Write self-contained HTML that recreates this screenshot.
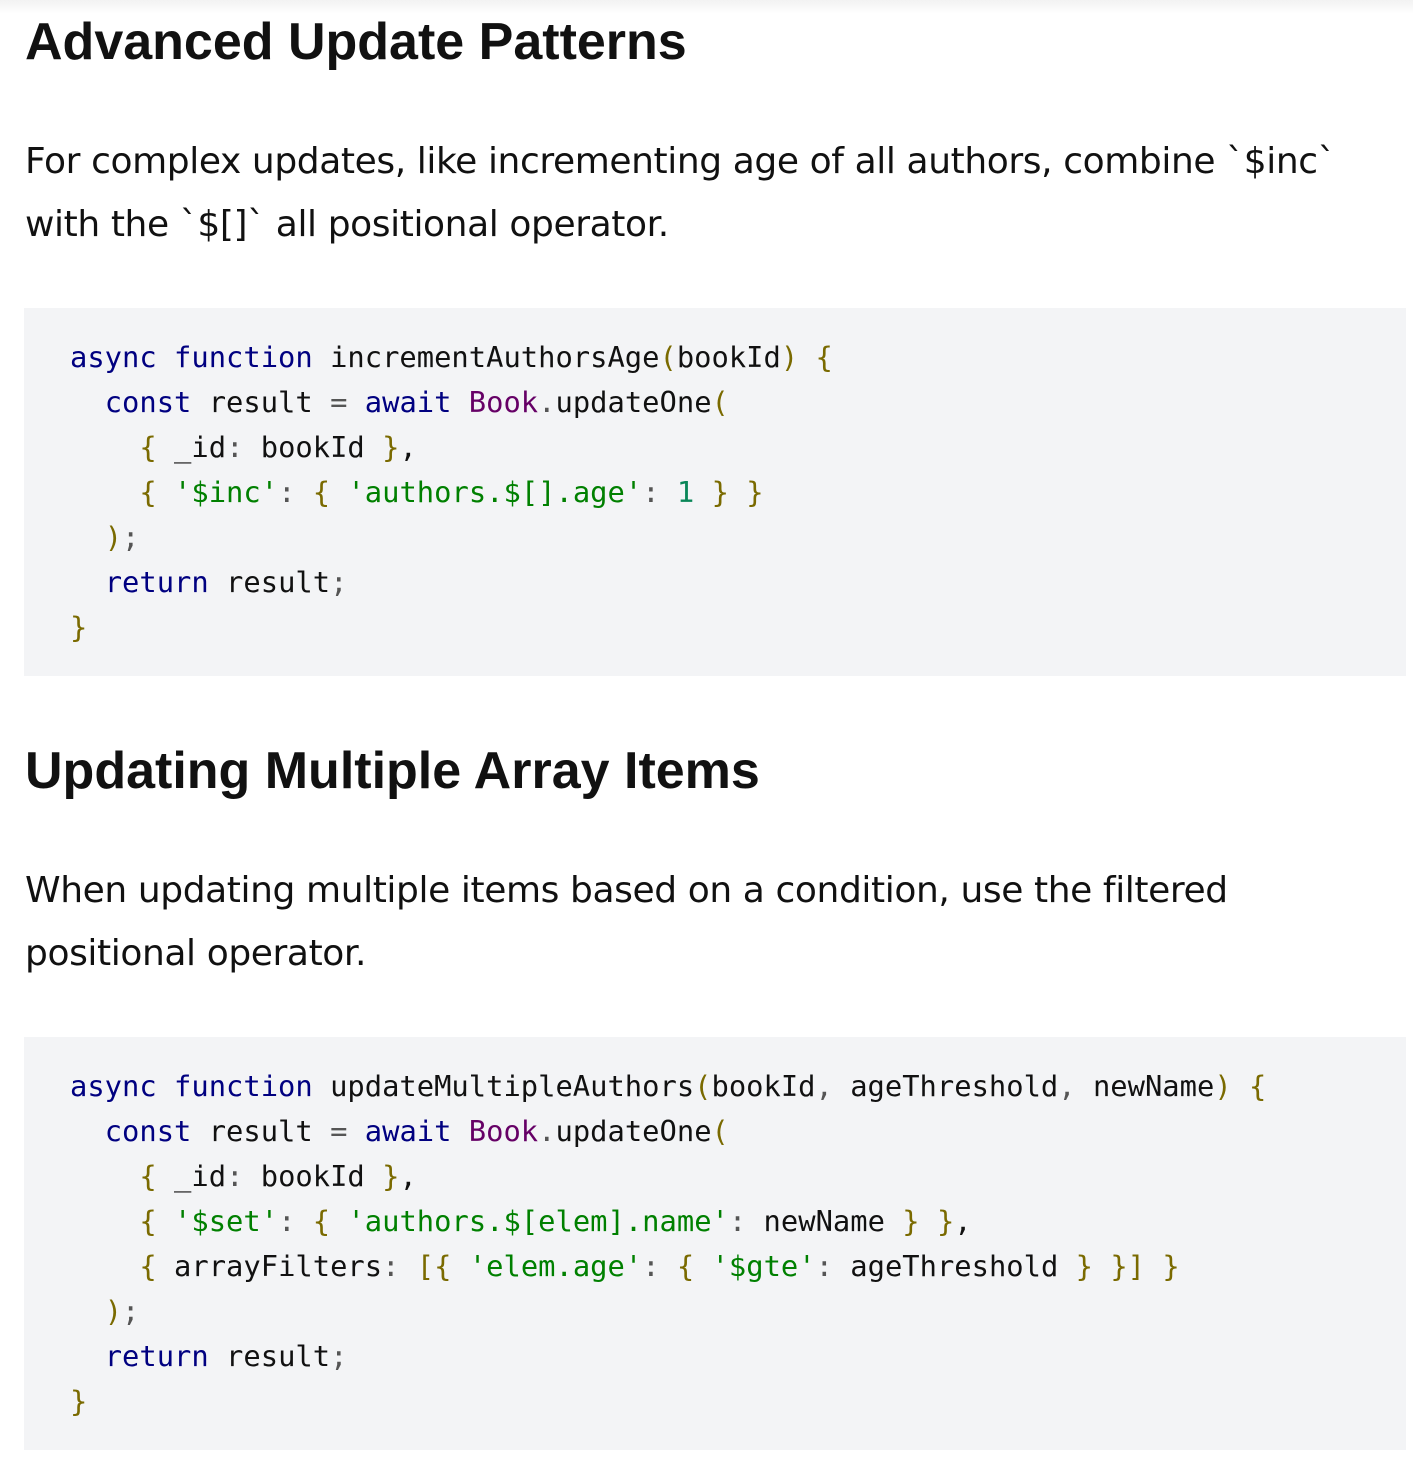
<!DOCTYPE html>
<html><head><style>
body{margin:0;width:1413px;height:1462px;background:#fff;position:relative;overflow:hidden;font-family:"DejaVu Sans","Liberation Sans",sans-serif;color:#111}
.h{position:absolute;left:25px;margin:0;font-family:"Liberation Sans",sans-serif;font-size:52px;font-weight:bold;line-height:60px;white-space:nowrap;letter-spacing:0px}
.p{position:absolute;left:25px;margin:0;font-size:36px;line-height:63px;width:1360px;letter-spacing:-0.4px}
.c{position:absolute;left:24px;width:1382px;background:#f3f4f6}
pre{margin:0;position:absolute;left:46px;font-family:"DejaVu Sans Mono","Liberation Mono",monospace;font-size:28.8px;line-height:45px;color:#111}
.k{color:#000080}.b{color:#7a6a00}.s{color:#008000}.n{color:#098658}.cl{color:#660066}.g{color:#555}
.top{position:absolute;top:0;left:0;width:100%;height:14px;background:linear-gradient(#f2f2f2,#fff)}
</style></head><body>
<div class="top"></div>
<h1 class="h" style="top:12px">Advanced Update Patterns</h1>
<p class="p" style="top:130px">For complex updates, like incrementing age of all authors, combine `$inc` with the `$[]` all positional operator.</p>
<div class="c" style="top:308px;height:368px"><pre style="top:27px"><span class="k">async function</span> incrementAuthorsAge<span class="b">(</span>bookId<span class="b">)</span> <span class="b">{</span>
  <span class="k">const</span> result <span class="g">=</span> <span class="k">await</span> <span class="cl">Book</span><span class="g">.</span>updateOne<span class="b">(</span>
    <span class="b">{</span> _id<span class="g">:</span> bookId <span class="b">}</span>,
    <span class="b">{</span> <span class="s">'$inc'</span><span class="g">:</span> <span class="b">{</span> <span class="s">'authors.$[].age'</span><span class="g">:</span> <span class="n">1</span> <span class="b">} }</span>
  <span class="b">)</span><span class="g">;</span>
  <span class="k">return</span> result<span class="g">;</span>
<span class="b">}</span></pre></div>
<h1 class="h" style="top:741px">Updating Multiple Array Items</h1>
<p class="p" style="top:859px">When updating multiple items based on a condition, use the filtered positional operator.</p>
<div class="c" style="top:1037px;height:413px"><pre style="top:27px"><span class="k">async function</span> updateMultipleAuthors<span class="b">(</span>bookId<span class="g">,</span> ageThreshold<span class="g">,</span> newName<span class="b">)</span> <span class="b">{</span>
  <span class="k">const</span> result <span class="g">=</span> <span class="k">await</span> <span class="cl">Book</span><span class="g">.</span>updateOne<span class="b">(</span>
    <span class="b">{</span> _id<span class="g">:</span> bookId <span class="b">}</span>,
    <span class="b">{</span> <span class="s">'$set'</span><span class="g">:</span> <span class="b">{</span> <span class="s">'authors.$[elem].name'</span><span class="g">:</span> newName <span class="b">} }</span>,
    <span class="b">{</span> arrayFilters<span class="g">:</span> <span class="b">[{</span> <span class="s">'elem.age'</span><span class="g">:</span> <span class="b">{</span> <span class="s">'$gte'</span><span class="g">:</span> ageThreshold <span class="b">} }] }</span>
  <span class="b">)</span><span class="g">;</span>
  <span class="k">return</span> result<span class="g">;</span>
<span class="b">}</span></pre></div>
</body></html>
